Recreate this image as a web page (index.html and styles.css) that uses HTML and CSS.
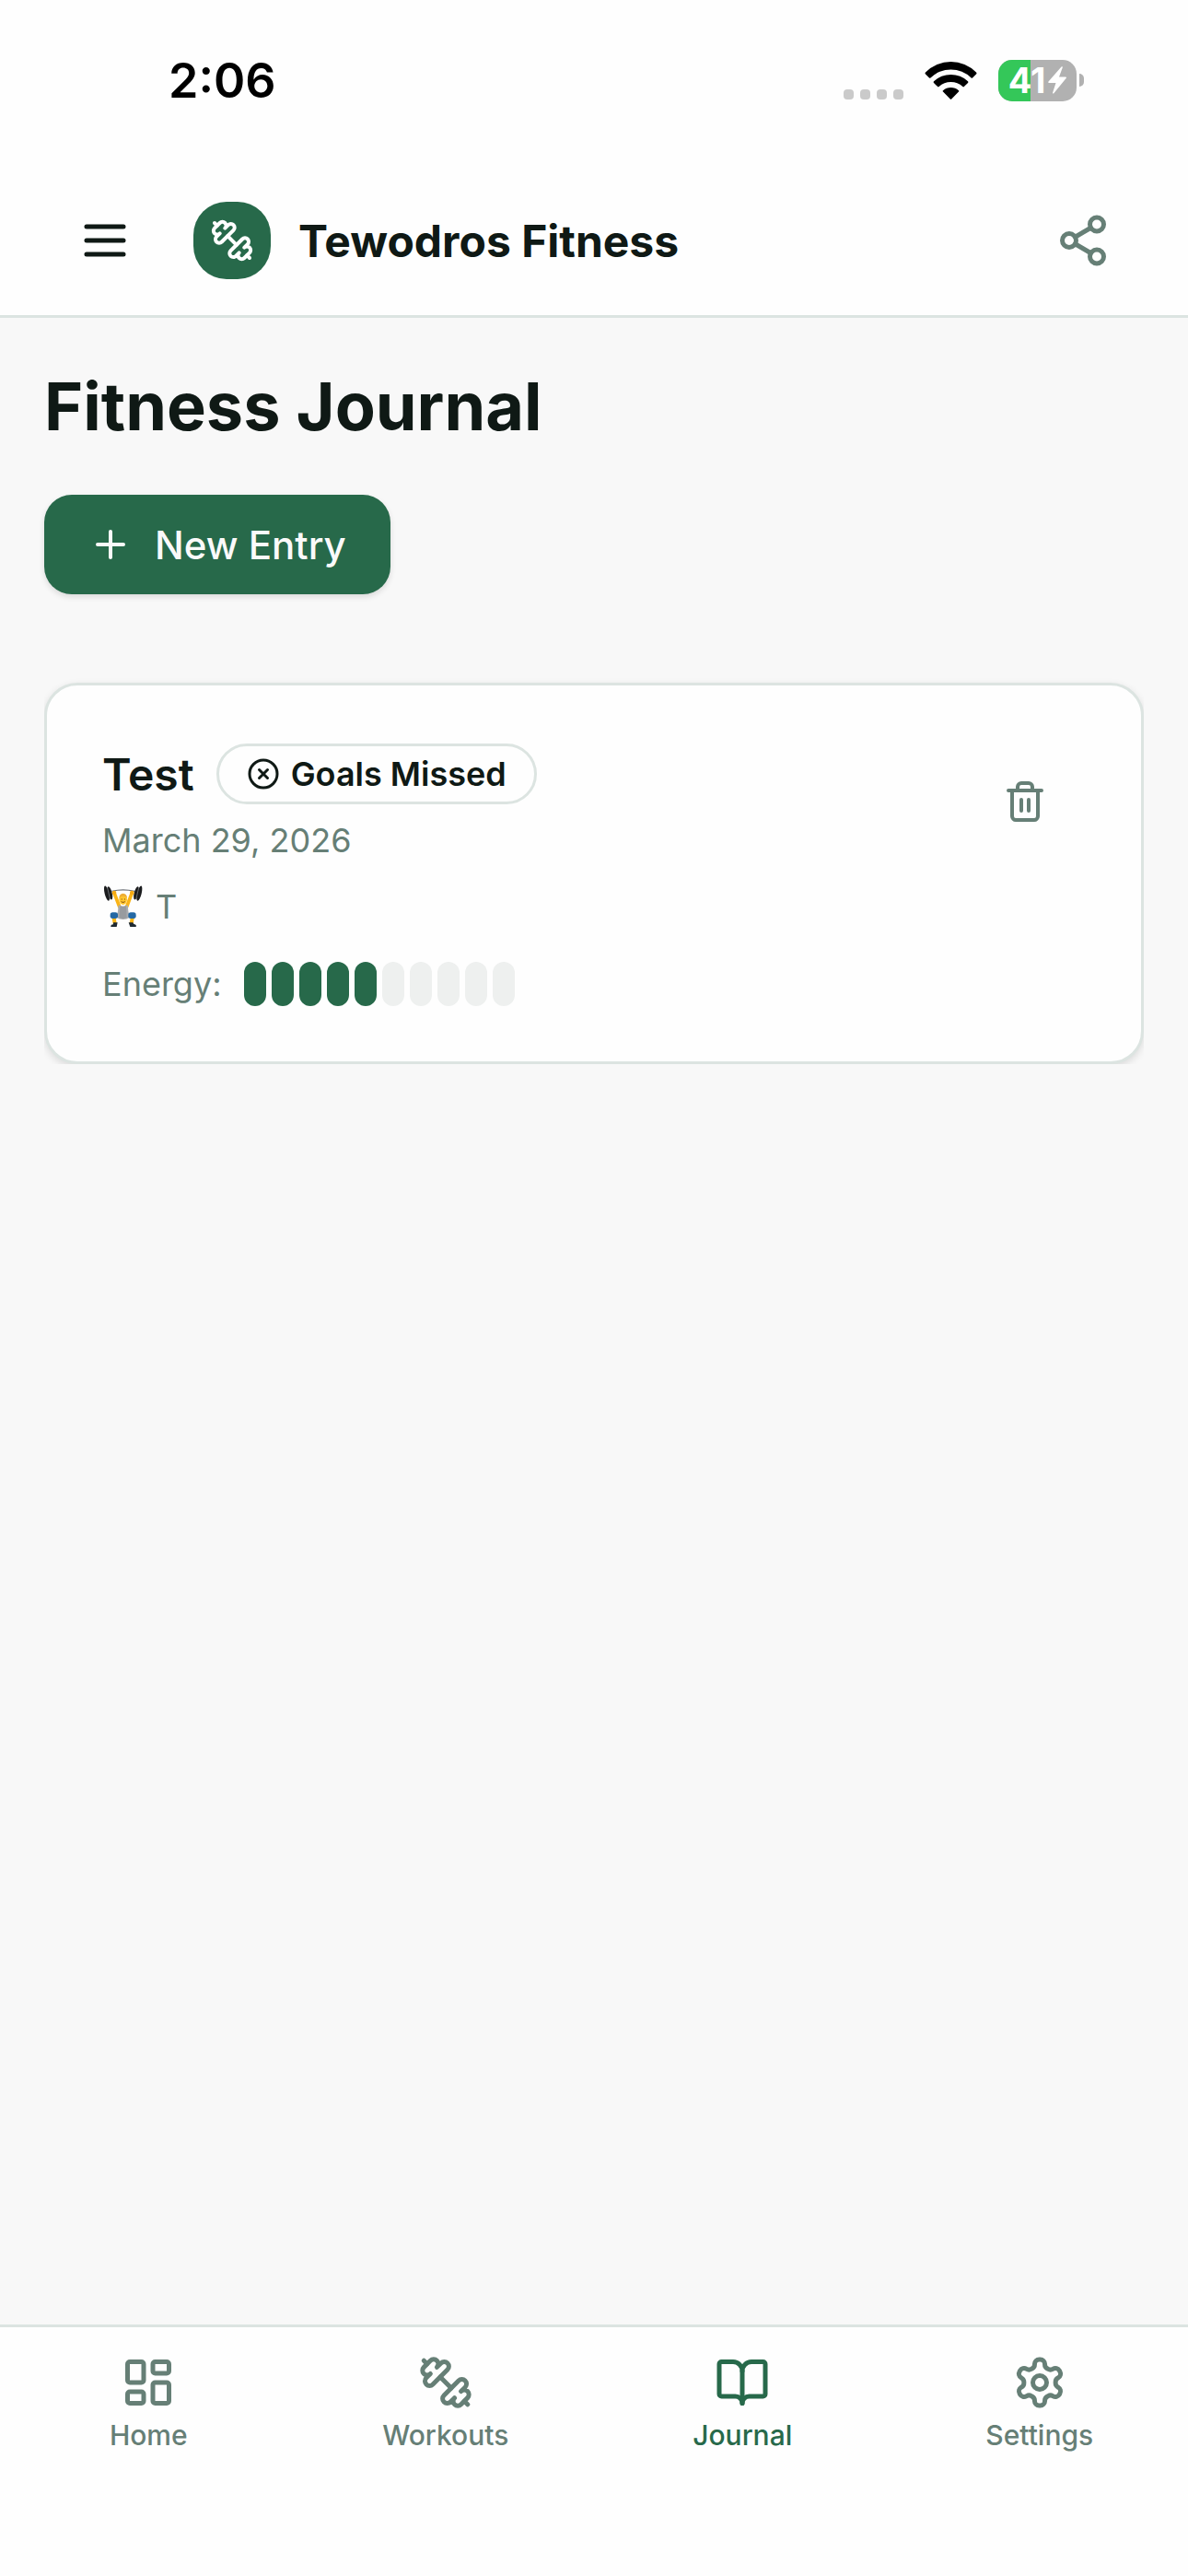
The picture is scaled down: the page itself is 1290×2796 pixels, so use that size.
FILE: index.html
```html
<!DOCTYPE html>
<html lang="en">
<head>
  <meta charset="UTF-8">
  <meta name="viewport" content="width=device-width, initial-scale=1.0">
  <title>Fitness Journal - Tewodros Fitness</title>
  <link rel="stylesheet" href="styles.css">
</head>

<body>

  <!-- Shared icon shapes -->
  <svg class="sprite" aria-hidden="true">
    <symbol id="icon-dumbbell" viewBox="0 0 24 24">
      <path d="M14.4 14.4 9.6 9.6"/>
      <path d="M18.657 21.485a2 2 0 1 1-2.829-2.828l-1.767 1.768a2 2 0 1 1-2.829-2.829l6.364-6.364a2 2 0 1 1 2.829 2.829l-1.768 1.767a2 2 0 1 1 2.828 2.829z"/>
      <path d="m21.5 21.5-1.4-1.4"/>
      <path d="M3.9 3.9 2.5 2.5"/>
      <path d="M6.404 12.768a2 2 0 1 1-2.829-2.829l1.768-1.767a2 2 0 1 1-2.828-2.829l2.828-2.828a2 2 0 1 1 2.829 2.828l1.767-1.768a2 2 0 1 1 2.829 2.829z"/>
    </symbol>
  </svg>

  <header class="top">
    <!-- Phone status bar -->
    <div class="status-bar">
      <span class="time">2:06</span>
      <div class="status-icons">
        <div class="signal"><i></i><i></i><i></i><i></i></div>
        <svg class="wifi" viewBox="0 0 57 42" aria-label="Wi-Fi">
          <path d="M1 12.5a38.5 38.5 0 0 1 55 0q1 1 0 2l-4 4q-.7.6-1.4 0a31.5 31.5 0 0 0-44.2 0q-.7.6-1.4 0l-4-4q-1-1 0-2z"/>
          <path d="M10 22.3a27 27 0 0 1 37 0q.8.8 0 1.6l-4.2 4.2q-.7.6-1.4 0a19 19 0 0 0-25.8 0q-.7.6-1.4 0L10 23.9q-.8-.8 0-1.6z"/>
          <path d="M20 32.2a13 13 0 0 1 17 0q.7.7 0 1.4l-7.8 7.800q-.7.7-1.4 0L20 33.6q-.7-.7 0-1.4z"/>
        </svg>
        <div class="battery">
          <div class="battery-body">
            <div class="battery-fill" style="width: 41%"></div>
            <div class="battery-label">
              <span>41</span>
              <svg class="bolt" viewBox="0 0 20 30" aria-label="Charging">
                <path d="M14.5.5c1-.8 1.6-.2 1.2 1L12 11.5h7c1 0 1.2.8.6 1.5L6.5 29c-.9 1-1.7.5-1.3-.7L8.5 18H1.2c-1 0-1.4-.8-.7-1.6z"/>
              </svg>
            </div>
          </div>
          <div class="battery-cap"></div>
        </div>
      </div>
    </div>

    <!-- App bar -->
    <div class="app-bar">
      <button class="icon-btn" type="button" aria-label="Menu">
        <svg class="icon" viewBox="0 0 24 24"><path d="M4 6h16M4 12h16M4 18h16"/></svg>
      </button>
      <div class="brand">
        <div class="logo"><svg class="icon icon-sm"><use href="#icon-dumbbell"/></svg></div>
        <span class="brand-name">Tewodros Fitness</span>
      </div>
      <button class="icon-btn muted" type="button" aria-label="Share">
        <svg class="icon" viewBox="0 0 24 24">
          <circle cx="18" cy="5" r="3"/>
          <circle cx="6" cy="12" r="3"/>
          <circle cx="18" cy="19" r="3"/>
          <path d="m8.59 13.51 6.83 3.98M15.41 6.51l-6.82 3.98"/>
        </svg>
      </button>
    </div>
  </header>

  <main class="content">
    <h1>Fitness Journal</h1>
    <button class="new-entry" type="button">
      <svg class="icon icon-sm" viewBox="0 0 24 24"><path d="M5 12h14M12 5v14"/></svg>
      New Entry
    </button>

    <!-- Journal entries -->
    <div class="entries">
      <article class="entry">
        <div class="entry-body">
          <div class="entry-head">
            <h2>Test</h2>
            <span class="badge">
              <svg class="icon icon-xs" viewBox="0 0 24 24"><circle cx="12" cy="12" r="10"/><path d="m15 9-6 6M9 9l6 6"/></svg>
              Goals Missed
            </span>
          </div>
          <p class="date">March 29, 2026</p>
          <p class="workout">
            <svg class="lifter" viewBox="0 0 132 138" role="img" aria-label="Weight lifter">
              <path d="M28 19Q65 10 102 19" fill="none" stroke="#6d7278" stroke-width="4"/>
              <g fill="#1b1c1e">
                <ellipse cx="12" cy="26" rx="7" ry="25" transform="rotate(-14 12 26)"/>
                <ellipse cx="22" cy="25" rx="7" ry="22" transform="rotate(-14 22 25)"/>
                <ellipse cx="118" cy="26" rx="7" ry="25" transform="rotate(14 118 26)"/>
                <ellipse cx="108" cy="25" rx="7" ry="22" transform="rotate(14 108 25)"/>
              </g>
              <path d="M14 8 22 42M116 8l-8 34" stroke="#6a6d71" stroke-width="3"/>
              <path d="M37 27 53 69M93 27 77 69" stroke="#fbb416" stroke-width="11" stroke-linecap="round"/>
              <circle cx="36" cy="24" r="7" fill="#f5a913"/>
              <circle cx="94" cy="24" r="7" fill="#f5a913"/>
              <path d="M48 98 34 100 38 124M82 98l14 2-4 24" fill="none" stroke="#fbb416" stroke-width="12"/>
              <path d="M50 64q15 7 30 0l2 20 5 20q-22 14-44 0l5-20z" fill="#aaadb0"/>
              <path d="M55 67q10 5 20 0l2 39q-12 5-24 0z" fill="#989b9f"/>
              <rect x="23" y="88" width="25" height="20" rx="8" fill="#2469a5"/>
              <rect x="82" y="88" width="25" height="20" rx="8" fill="#2469a5"/>
              <ellipse cx="65" cy="46" rx="13" ry="17" fill="#ffc52d"/>
              <path d="M52 42q0-15 13-16 13 1 13 16-5-7-13-7t-13 7z" fill="#edae35"/>
              <path d="M59 45h3M69 45h3M59 53q6 5 12 0" fill="none" stroke="#7b4710" stroke-width="3"/>
              <path d="M33 121h14l-3 14H25q-1-7 8-8zM83 121h14q0 5 9 7 3 3 1 7H88z" fill="#1e2932"/>
            </svg>
            T
          </p>
          <div class="energy">
            <span>Energy:</span>
            <div class="energy-bars" role="meter" aria-label="Energy" aria-valuemin="0" aria-valuemax="10" aria-valuenow="5">
              <i class="on"></i><i class="on"></i><i class="on"></i><i class="on"></i><i class="on"></i>
              <i></i><i></i><i></i><i></i><i></i>
            </div>
          </div>
        </div>
        <button class="delete-btn" type="button" aria-label="Delete entry">
          <svg class="icon icon-sm" viewBox="0 0 24 24">
            <path d="M3 6h18M19 6v14c0 1-1 2-2 2H7c-1 0-2-1-2-2V6M8 6V4c0-1 1-2 2-2h4c1 0 2 1 2 2v2M10 11v6M14 11v6"/>
          </svg>
        </button>
      </article>
    </div>
  </main>

  <!-- Bottom tabs -->
  <nav class="tabs">
    <a href="#home">
      <svg class="icon" viewBox="0 0 24 24">
        <rect x="3" y="3" width="7" height="9" rx="1"/>
        <rect x="14" y="3" width="7" height="5" rx="1"/>
        <rect x="14" y="12" width="7" height="9" rx="1"/>
        <rect x="3" y="16" width="7" height="5" rx="1"/>
      </svg>
      Home
    </a>
    <a href="#workouts">
      <svg class="icon"><use href="#icon-dumbbell"/></svg>
      Workouts
    </a>
    <a href="#journal" class="active" aria-current="page">
      <svg class="icon" viewBox="0 0 24 24">
        <path d="M12 7v14"/>
        <path d="M3 18a1 1 0 0 1-1-1V4a1 1 0 0 1 1-1h5a4 4 0 0 1 4 4 4 4 0 0 1 4-4h5a1 1 0 0 1 1 1v13a1 1 0 0 1-1 1h-6a3 3 0 0 0-3 3 3 3 0 0 0-3-3z"/>
      </svg>
      Journal
    </a>
    <a href="#settings">
      <svg class="icon" viewBox="0 0 24 24">
        <path d="M12.22 2h-.44a2 2 0 0 0-2 2v.18a2 2 0 0 1-1 1.73l-.43.25a2 2 0 0 1-2 0l-.15-.08a2 2 0 0 0-2.73.73l-.22.38a2 2 0 0 0 .73 2.73l.15.1a2 2 0 0 1 1 1.72v.51a2 2 0 0 1-1 1.74l-.15.09a2 2 0 0 0-.73 2.73l.22.38a2 2 0 0 0 2.73.73l.15-.08a2 2 0 0 1 2 0l.43.25a2 2 0 0 1 1 1.73V20a2 2 0 0 0 2 2h.44a2 2 0 0 0 2-2v-.18a2 2 0 0 1 1-1.73l.43-.25a2 2 0 0 1 2 0l.15.08a2 2 0 0 0 2.73-.73l.22-.39a2 2 0 0 0-.73-2.73l-.15-.08a2 2 0 0 1-1-1.74v-.5a2 2 0 0 1 1-1.74l.15-.09a2 2 0 0 0 .73-2.73l-.22-.38a2 2 0 0 0-2.73-.73l-.15.08a2 2 0 0 1-2 0l-.43-.25a2 2 0 0 1-1-1.73V4a2 2 0 0 0-2-2z"/>
        <circle cx="12" cy="12" r="3"/>
      </svg>
      Settings
    </a>
  </nav>

</body>
</html>
```
FILE: styles.css
```css
* {
    box-sizing: border-box;
    margin: 0;
    padding: 0;
}

body {
    min-height: 100vh;
    display: flex;
    flex-direction: column;
    background: #f8f8f8;
    color: #0f1915;
    font-family: Inter, "Liberation Sans", sans-serif;
    font-size: 36px;
}

button {
    font-family: inherit;
    color: inherit;
    background: none;
    border: none;
    cursor: pointer;
}

/* Icons */
.sprite {
    position: absolute;
    width: 0;
    height: 0;
}

.icon {
    display: block;
    flex: none;
    width: 60px;
    height: 60px;
    fill: none;
    stroke: currentColor;
    stroke-width: 2;
    stroke-linecap: round;
    stroke-linejoin: round;
}

.icon-sm {
    width: 48px;
    height: 48px;
}

.icon-xs {
    width: 36px;
    height: 36px;
}

.muted {
    color: #667f76;
}

/* Status bar */
.top {
    background: #fefefe;
    border-bottom: 3px solid #dce4e1;
}

.status-bar {
    display: flex;
    align-items: center;
    justify-content: space-between;
    height: 180px;
    padding: 60px 113px 66px 183px;
    color: #000;
}

.time {
    font-size: 52px;
    font-weight: 600;
}

.status-icons {
    display: flex;
    align-items: center;
    gap: 23px;
    height: 42px;
}

.signal {
    display: flex;
    align-self: flex-end;
    gap: 7px;
}

.signal i {
    width: 11px;
    height: 11px;
    border-radius: 4px;
    background: #cacaca;
}

.wifi {
    width: 57px;
    height: 42px;
}

.battery {
    display: flex;
    align-items: center;
    gap: 3px;
}

.battery-body {
    position: relative;
    width: 85px;
    height: 45px;
    border-radius: 15px;
    background: #b1b1b1;
}

.battery-fill {
    height: 100%;
    border-radius: 15px 0 0 15px;
    background: #34c759;
}

/* level text lies over the fill */
.battery-label {
    position: absolute;
    inset: 0;
    display: flex;
    align-items: center;
    justify-content: center;
    gap: 3px;
    color: #fff;
    font-size: 38px;
    line-height: 45px;
    font-weight: 700;
}

.bolt {
    width: 20px;
    height: 30px;
    fill: #fff;
}

.battery-cap {
    width: 5px;
    height: 14px;
    border-radius: 0 5px 5px 0;
    background: #b1b1b1;
}

/* App bar */
.app-bar {
    display: flex;
    align-items: center;
    gap: 36px;
    height: 162px;
    padding: 0 54px;
}

.icon-btn {
    display: flex;
    align-items: center;
    justify-content: center;
    width: 120px;
    height: 120px;
}

.brand {
    flex: 1;
    display: flex;
    align-items: center;
    gap: 30px;
}

.logo {
    display: flex;
    align-items: center;
    justify-content: center;
    width: 84px;
    height: 84px;
    border-radius: 36px;
    background: #27694a;
    color: #fff;
}

.brand-name {
    font-size: 48px;
    font-weight: 700;
}

/* Journal page */
.content {
    flex: 1;
    padding: 48px;
}

h1 {
    margin-bottom: 48px;
    font-size: 72px;
    line-height: 96px;
    font-weight: 700;
}

.new-entry {
    display: flex;
    align-items: center;
    gap: 24px;
    height: 108px;
    padding: 0 48px;
    border-radius: 30px;
    background: #27694a;
    color: #fafafa;
    font-size: 42px;
    font-weight: 500;
    box-shadow: 0 3px 6px rgba(0, 0, 0, 0.12);
}

/* the list clips the card shadow on its sides and bottom */
.entries {
    margin-top: 72px;
    padding-top: 24px;
    overflow: hidden;
}

.entry {
    display: flex;
    align-items: flex-start;
    justify-content: space-between;
    padding: 60px;
    border: 3px solid #dce4e1;
    border-radius: 36px;
    background: #fefefe;
    box-shadow: 0 3px 9px rgba(0, 0, 0, 0.12);
}

.entry-head {
    display: flex;
    align-items: center;
    gap: 24px;
    height: 72px;
    margin-bottom: 6px;
}

h2 {
    font-size: 48px;
    font-weight: 600;
}

.badge {
    display: flex;
    align-items: center;
    gap: 12px;
    height: 66px;
    padding: 0 30px;
    border: 3px solid #dce4e1;
    border-radius: 33px;
    font-weight: 600;
}

.date,
.workout,
.energy {
    color: #667f76;
}

.date,
.workout {
    line-height: 60px;
}

.workout {
    display: flex;
    align-items: center;
    gap: 12px;
    margin-top: 12px;
}

.lifter {
    width: 46px;
    height: 46px;
}

.energy {
    display: flex;
    align-items: center;
    gap: 24px;
    margin-top: 30px;
}

.energy-bars {
    display: flex;
    gap: 6px;
}

.energy-bars i {
    width: 24px;
    height: 48px;
    border-radius: 12px;
    background: #eef0ef;
}

.energy-bars .on {
    background: #27694a;
}

.delete-btn {
    display: flex;
    align-items: center;
    justify-content: center;
    width: 132px;
    height: 132px;
    color: #667f76;
}

/* Bottom tabs */
.tabs {
    display: grid;
    grid-template-columns: repeat(4, 1fr);
    padding: 30px 0 132px;
    border-top: 3px solid #dce4e1;
    background: #fefefe;
}

.tabs a {
    display: flex;
    flex-direction: column;
    align-items: center;
    gap: 6px;
    color: #667f76;
    font-size: 30px;
    line-height: 42px;
    font-weight: 500;
    text-decoration: none;
}

.tabs .active {
    color: #27694a;
}
```
